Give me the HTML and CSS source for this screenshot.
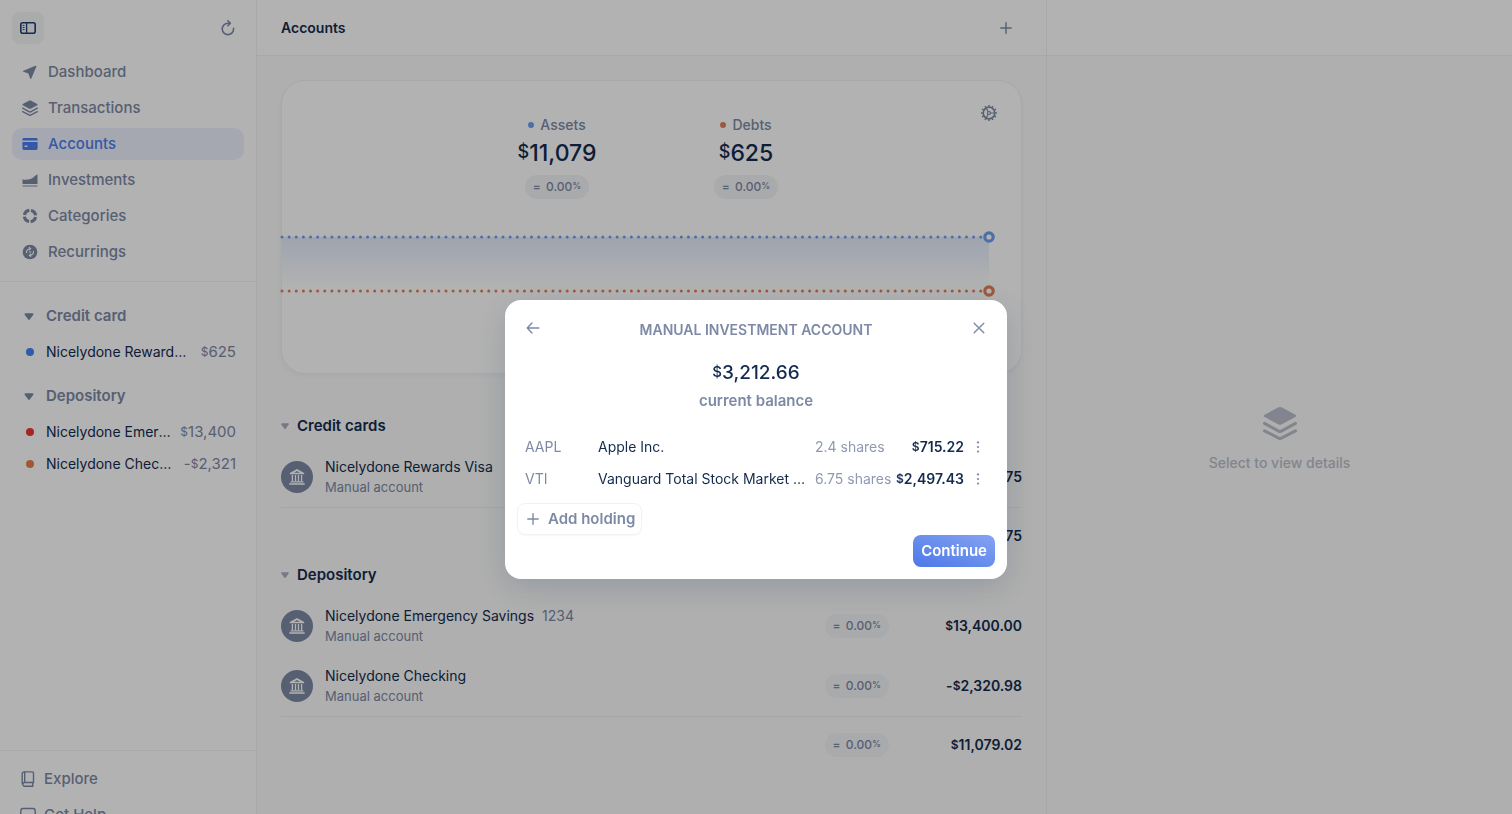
FILE: index.html
```html
<!DOCTYPE html>
<html lang="en">
<head>
    <meta charset="UTF-8">
    <meta name="viewport" content="width=device-width, initial-scale=1.0">
    <title>Accounts</title>
    <link rel="stylesheet" href="styles.css">
</head>
<body>
    <svg width="0" height="0" class="sprite" aria-hidden="true">
        <symbol id="layers" viewBox="0 0 16 16">
            <path d="M7.3.6a1.6 1.6 0 0 1 1.4 0l6.5 3.5c.5.3.5.8 0 1.1L8.7 8.7a1.6 1.6 0 0 1-1.4 0L.8 5.2c-.5-.3-.5-.8 0-1.1z" fill="currentColor"/>
            <path d="M.7 8.2 7.4 11.8a1.3 1.3 0 0 0 1.2 0L15.3 8.2M.7 11.7 7.4 15.1a1.3 1.3 0 0 0 1.2 0L15.3 11.7" fill="none" stroke="currentColor" stroke-width="1.4" stroke-linecap="round"/>
        </symbol>
        <symbol id="bank" viewBox="0 0 16 16">
            <path d="M8 0 .8 4v1.2h14.4V4zM8 2l3 1.8H5z" fill="currentColor" fill-rule="evenodd"/>
            <path d="M3.4 6v6M6.5 6v6M9.5 6v6M12.6 6v6" stroke="currentColor" stroke-width="1.3"/>
            <path d="M1.6 12.2h12.8v1.3H1.6zM.3 14.3h15.4v1.5H.3z" fill="currentColor"/>
        </symbol>
        <symbol id="caret" viewBox="0 0 8 6">
            <path d="M.9.3h6.2c.6 0 .9.6.6 1.1L4.8 5.4a1 1 0 0 1-1.6 0L.3 1.4C0 .9.3.3.9.3z" fill="currentColor"/>
        </symbol>
        <symbol id="plus" viewBox="0 0 12 12">
            <path d="M6 .8v10.4M.8 6h10.4" stroke="currentColor" stroke-width="1.4" stroke-linecap="round"/>
        </symbol>
        <symbol id="dots" viewBox="0 0 4 12">
            <circle cx="2" cy="1.4" r="1.1" fill="currentColor"/>
            <circle cx="2" cy="6" r="1.1" fill="currentColor"/>
            <circle cx="2" cy="10.6" r="1.1" fill="currentColor"/>
        </symbol>
    </svg>

    <div class="app">
        <aside class="sidebar">
            <div class="sidebar-top">
                <button class="icon-btn toggle" aria-label="Toggle sidebar">
                    <svg width="16" height="12" viewBox="0 0 16 12" fill="none" stroke="currentColor">
                        <rect x=".8" y=".8" width="14.4" height="10.4" rx="2" stroke-width="1.6"/>
                        <path d="M6.6 1v10" stroke-width="1.3"/>
                        <path d="M2.7 3.4h1.8M2.7 5.5h1.8M2.7 7.6h1.8" stroke-width="1"/>
                    </svg>
                </button>
                <button class="icon-btn" aria-label="Refresh">
                    <svg width="14" height="16" viewBox="0 0 14 16" fill="none" stroke="currentColor" stroke-width="1.6" stroke-linecap="round" stroke-linejoin="round">
                        <path d="M12.6 8.4A5.7 5.7 0 1 1 6.9 3.2H9"/>
                        <path d="M6.9.8 9.3 3.2 6.9 5.7"/>
                    </svg>
                </button>
            </div>

            <nav class="nav">
                <a href="#">
                    <svg width="16" height="16" viewBox="0 0 16 16"><path d="M13.4 1.8 1.4 6.7c-.6.3-.6.9 0 1.1l5 1.8 1.8 5c.2.6.8.6 1.1 0L14.3 2.7c.2-.6-.3-1.1-.9-.9z" fill="currentColor"/></svg>
                    Dashboard
                </a>
                <a href="#">
                    <svg width="16" height="16"><use href="#layers"/></svg>
                    Transactions
                </a>
                <a href="#" class="active">
                    <svg width="16" height="16" viewBox="0 0 16 16"><path d="M2 2h12c1 0 1.6.6 1.6 1.6v.9H.4v-.9C.4 2.6 1 2 2 2zM.4 6h15.2v6.2c0 1-.6 1.7-1.6 1.7H2c-1 0-1.6-.7-1.6-1.7zM2.5 9.5v1.4h3V9.5z" fill="currentColor" fill-rule="evenodd"/></svg>
                    Accounts
                </a>
                <a href="#">
                    <svg width="16" height="16" viewBox="0 0 16 16"><path d="M.5 7.6c3 .3 4.5-.2 7-.4C10.5 6.8 12 4.3 15.5 2.2V12H.5zM.5 13.4h15v1.2H.5z" fill="currentColor"/></svg>
                    Investments
                </a>
                <a href="#">
                    <svg width="16" height="16" viewBox="0 0 16 16"><circle cx="8" cy="8" r="5.6" fill="none" stroke="currentColor" stroke-width="3.2" pathLength="100" stroke-dasharray="20 5" stroke-dashoffset="-3"/></svg>
                    Categories
                </a>
                <a href="#">
                    <svg width="16" height="16" viewBox="0 0 16 16">
                        <circle cx="8" cy="8" r="7.3" fill="currentColor"/>
                        <path d="M4.6 9.2A3.6 3.6 0 0 1 8 4.7M11.4 6.8A3.6 3.6 0 0 1 8 11.3M7 3.2l1.6 1.5L7 6.2M9 9.8l-1.6 1.5L9 12.8M6.7 8h2.6" fill="none" stroke="#fff" stroke-width="1.1"/>
                    </svg>
                    Recurrings
                </a>
            </nav>

            <div class="side-accounts">
                <section>
                    <h3><svg width="10" height="7"><use href="#caret"/></svg>Credit card</h3>
                    <a href="#"><i class="dot blue"></i><span class="name">Nicelydone Rewards Visa</span><span class="sum"><small>$</small>625</span></a>
                </section>
                <section>
                    <h3><svg width="10" height="7"><use href="#caret"/></svg>Depository</h3>
                    <a href="#"><i class="dot red"></i><span class="name">Nicelydone Emergency Savings</span><span class="sum"><small>$</small>13,400</span></a>
                    <a href="#"><i class="dot orange"></i><span class="name">Nicelydone Checking</span><span class="sum">-<small>$</small>2,321</span></a>
                </section>
            </div>

            <div class="sidebar-bottom">
                <a href="#">
                    <svg width="16" height="16" viewBox="0 0 16 16" fill="none" stroke="currentColor" stroke-width="1.4"><path d="M4 .9h8.2c.8 0 1.3.5 1.3 1.3v9.3H4a2 2 0 0 0 0 3.7h9.5M2.2 13.3V2.7C2.2 1.6 3 .9 4 .9M4.7 1v10.4M12.7 11.6v3.5"/></svg>
                    Explore
                </a>
                <a href="#">
                    <svg width="16" height="16" viewBox="0 0 16 16" fill="none" stroke="currentColor" stroke-width="1.4"><path d="M3 1.5h10c1.3 0 2.2.8 2.2 2.2v6c0 1.3-.9 2.2-2.2 2.2H9l-4 3v-3H3C1.7 11.9.8 11 .8 9.7v-6c0-1.4.9-2.2 2.2-2.2z"/></svg>
                    Get Help
                </a>
            </div>
        </aside>

        <main class="main">
            <header class="bar">
                <h1>Accounts</h1>
                <button class="icon-btn" aria-label="Add account"><svg width="12" height="12"><use href="#plus"/></svg></button>
            </header>

            <div class="content">
                <div class="card">
                    <button class="icon-btn settings" aria-label="Chart settings">
                        <svg width="18" height="18" viewBox="0 0 18 18" fill="none" stroke="currentColor">
                            <circle cx="9" cy="9" r="7.2" stroke-width="1.6" pathLength="120" stroke-dasharray="4 6" stroke-dashoffset="2"/>
                            <circle cx="9" cy="9" r="5.8" stroke-width="1.7"/>
                            <circle cx="9" cy="9" r="1.5" stroke-width="1.2"/>
                            <path d="M10.5 9H15M8.2 7.7 6 3.9M8.2 10.3 6 14.1" stroke-width="1.2"/>
                        </svg>
                    </button>
                    <div class="stats">
                        <div class="stat">
                            <span class="label"><i class="point assets"></i>Assets</span>
                            <strong><small>$</small>11,079</strong>
                            <span class="pill"><b>=</b> 0.00<small>%</small></span>
                        </div>
                        <div class="stat">
                            <span class="label"><i class="point debts"></i>Debts</span>
                            <strong><small>$</small>625</strong>
                            <span class="pill"><b>=</b> 0.00<small>%</small></span>
                        </div>
                    </div>
                    <svg class="chart" height="72">
                        <defs>
                            <linearGradient id="fade" x1="0" y1="0" x2="0" y2="1">
                                <stop offset="0" stop-color="#4a80e8" stop-opacity=".16"/>
                                <stop offset="1" stop-color="#4a80e8" stop-opacity="0"/>
                            </linearGradient>
                        </defs>
                        <rect x="0" y="8" width="100%" height="50" fill="url(#fade)"/>
                        <g stroke-width="3" stroke-linecap="round" stroke-dasharray="0 7.13">
                            <line x1="0" y1="8" x2="100%" y2="8" stroke="#6f9ff0"/>
                            <line x1="0" y1="62" x2="100%" y2="62" stroke="#e08055"/>
                        </g>
                        <svg x="100%" overflow="visible" fill="#fff" stroke-width="3.2">
                            <circle cx="0" cy="8" r="4.2" stroke="#6f9ff0"/>
                            <circle cx="0" cy="62" r="4.2" stroke="#e08055"/>
                        </svg>
                    </svg>
                </div>

                <section class="group">
                    <h2><svg width="8" height="6"><use href="#caret"/></svg>Credit cards</h2>
                    <div class="account">
                        <span class="logo"><svg width="16" height="16"><use href="#bank"/></svg></span>
                        <div class="who">
                            <p>Nicelydone Rewards Visa</p>
                            <p class="sub">Manual account</p>
                        </div>
                        <span class="pill"><b>=</b> 0.00<small>%</small></span>
                        <span class="amount"><small>$</small>624.75</span>
                    </div>
                    <div class="total">
                        <span class="pill"><b>=</b> 0.00<small>%</small></span>
                        <span class="amount"><small>$</small>624.75</span>
                    </div>
                </section>

                <section class="group">
                    <h2><svg width="8" height="6"><use href="#caret"/></svg>Depository</h2>
                    <div class="account">
                        <span class="logo"><svg width="16" height="16"><use href="#bank"/></svg></span>
                        <div class="who">
                            <p>Nicelydone Emergency Savings <span class="mask">1234</span></p>
                            <p class="sub">Manual account</p>
                        </div>
                        <span class="pill"><b>=</b> 0.00<small>%</small></span>
                        <span class="amount"><small>$</small>13,400.00</span>
                    </div>
                    <div class="account">
                        <span class="logo"><svg width="16" height="16"><use href="#bank"/></svg></span>
                        <div class="who">
                            <p>Nicelydone Checking</p>
                            <p class="sub">Manual account</p>
                        </div>
                        <span class="pill"><b>=</b> 0.00<small>%</small></span>
                        <span class="amount">-<small>$</small>2,320.98</span>
                    </div>
                    <div class="total">
                        <span class="pill"><b>=</b> 0.00<small>%</small></span>
                        <span class="amount"><small>$</small>11,079.02</span>
                    </div>
                </section>
            </div>
        </main>

        <aside class="details">
            <div class="bar"></div>
            <div class="empty">
                <svg width="34" height="34"><use href="#layers"/></svg>
                <p>Select to view details</p>
            </div>
        </aside>
    </div>

    <div class="overlay">
        <div class="modal" role="dialog" aria-modal="true" aria-labelledby="modal-title">
            <div class="modal-head">
                <button class="icon-btn" aria-label="Back">
                    <svg width="14" height="12" viewBox="0 0 14 12" fill="none" stroke="currentColor" stroke-width="1.4" stroke-linecap="round" stroke-linejoin="round"><path d="M6 1 1.2 6 6 11M1.2 6h11.6"/></svg>
                </button>
                <h2 id="modal-title">MANUAL INVESTMENT ACCOUNT</h2>
                <button class="icon-btn" aria-label="Close">
                    <svg width="12" height="12" viewBox="0 0 12 12" stroke="currentColor" stroke-width="1.4" stroke-linecap="round"><path d="M1.2 1.2l9.6 9.6M10.8 1.2 1.2 10.8"/></svg>
                </button>
            </div>
            <div class="balance">
                <strong><small>$</small>3,212.66</strong>
                <span>current balance</span>
            </div>
            <table class="holdings">
                <tr>
                    <td class="ticker">AAPL</td>
                    <td class="company">Apple Inc.</td>
                    <td class="shares">2.4 shares</td>
                    <td class="value"><small>$</small>715.22</td>
                    <td class="more"><button class="icon-btn" aria-label="AAPL options"><svg width="4" height="12"><use href="#dots"/></svg></button></td>
                </tr>
                <tr>
                    <td class="ticker">VTI</td>
                    <td class="company">Vanguard Total Stock Market Index Fund ETF</td>
                    <td class="shares">6.75 shares</td>
                    <td class="value"><small>$</small>2,497.43</td>
                    <td class="more"><button class="icon-btn" aria-label="VTI options"><svg width="4" height="12"><use href="#dots"/></svg></button></td>
                </tr>
            </table>
            <button class="add"><svg width="12" height="12"><use href="#plus"/></svg>Add holding</button>
            <div class="modal-foot">
                <button class="continue">Continue</button>
            </div>
        </div>
    </div>
</body>
</html>
```

FILE: styles.css
```css
* {
    box-sizing: border-box;
    margin: 0;
    padding: 0;
}

body {
    font-family: Inter, "Liberation Sans", sans-serif;
    font-size: 15px;
    line-height: 20px;
    color: #142b4f;
    overflow: hidden;
}

a {
    color: inherit;
    text-decoration: none;
}

button {
    font: inherit;
    color: inherit;
    background: none;
    border: none;
    cursor: pointer;
}

svg {
    display: block;
    flex-shrink: 0;
}

.sprite {
    position: absolute;
}

/* raised currency and percent signs */
small {
    font-size: 12px;
    line-height: 1;
    vertical-align: 1px;
}

.icon-btn {
    display: flex;
    align-items: center;
    justify-content: center;
    width: 32px;
    height: 32px;
    border-radius: 8px;
    color: #7d89a5;
}

.app {
    display: grid;
    grid-template-columns: 257px 1fr 466px;
    height: 100vh;
}

/* Sidebar */
.sidebar {
    display: flex;
    flex-direction: column;
    min-height: 0;
    border-right: 1px solid #f0f2f3;
    background: #fff;
    color: #7d89a5;
}

.sidebar-top {
    display: flex;
    justify-content: space-between;
    padding: 12px;
}

.toggle {
    background: #f2f6f5;
    color: #1f3f70;
}

.nav {
    display: flex;
    flex-direction: column;
    gap: 4px;
    padding: 0 12px 13px;
    border-bottom: 1px solid #f0f2f3;
    font-weight: 500;
}

.nav a,
.sidebar-bottom a {
    display: flex;
    align-items: center;
    gap: 10px;
    height: 32px;
    padding: 0 10px;
    border-radius: 10px;
}

.nav a.active {
    background: #edf1fc;
    color: #4d7df0;
}

.side-accounts {
    flex: 1;
    display: flex;
    flex-direction: column;
    gap: 12px;
    min-height: 0;
    padding: 18px 20px;
    overflow: hidden;
}

.side-accounts h3 {
    display: flex;
    align-items: center;
    gap: 12px;
    height: 32px;
    margin-bottom: 4px;
    padding-left: 4px;
    font-size: 15px;
    font-weight: 600;
}

.side-accounts a {
    display: flex;
    align-items: center;
    height: 32px;
    padding-left: 6px;
}

.name {
    flex: 1;
    margin: 0 8px 0 12px;
    color: #142b4f;
    font-size: 14px;
    overflow: hidden;
    text-overflow: ellipsis;
    white-space: nowrap;
}

.dot {
    width: 8px;
    height: 8px;
    border-radius: 50%;
}

.dot.blue {
    background: #4285f4;
}

.dot.red {
    background: #ea3a30;
}

.dot.orange {
    background: #e58049;
}

.sidebar-bottom {
    display: flex;
    flex-direction: column;
    gap: 4px;
    flex-shrink: 0;
    height: 64px;
    padding: 12px 10px;
    border-top: 1px solid #f0f2f3;
    font-weight: 500;
    overflow: hidden;
}

.sidebar-bottom a {
    flex-shrink: 0;
    gap: 8px;
}

/* Main column */
.main,
.details {
    display: flex;
    flex-direction: column;
    min-width: 0;
    min-height: 0;
    background: #f9fbfa;
}

.bar {
    display: flex;
    align-items: center;
    justify-content: space-between;
    flex-shrink: 0;
    height: 56px;
    padding: 0 24px;
    border-bottom: 1px solid #f0f2f3;
    background: #fff;
}

h1 {
    font-size: 14px;
    font-weight: 600;
}

.content {
    flex: 1;
    padding: 24px;
    overflow: hidden;
}

.card {
    position: relative;
    height: 294px;
    margin-bottom: 41px;
    border: 1px solid #f0f2f3;
    border-radius: 24px;
    background: #fff;
    box-shadow: 0 2px 4px rgba(20, 43, 79, 0.04);
}

.settings {
    position: absolute;
    top: 16px;
    right: 16px;
}

.stats {
    display: flex;
    justify-content: center;
    padding-top: 34px;
}

.stat {
    display: flex;
    flex-direction: column;
    align-items: center;
    width: 189px;
}

.stat strong {
    margin: 4px 0 8px;
    font-size: 23px;
    font-weight: 500;
    line-height: 28px;
}

.stat strong small {
    font-size: 18px;
    vertical-align: 3px;
}

.label {
    display: flex;
    align-items: center;
    gap: 6px;
    color: #7d89a5;
    font-size: 14px;
    font-weight: 500;
}

.point {
    width: 6px;
    height: 6px;
    border-radius: 50%;
}

.point.assets {
    background: #6f9ff0;
}

.point.debts {
    background: #e08055;
}

.pill {
    padding: 0 8px;
    border-radius: 12px;
    background: #f2f4f7;
    color: #7d89a5;
    font-size: 12px;
    font-weight: 500;
    line-height: 24px;
    white-space: nowrap;
}

.pill b {
    margin-right: 2px;
    font-weight: 500;
}

.pill small {
    font-size: 9px;
    vertical-align: 2px;
}

.chart {
    width: calc(100% - 32px);
    margin-top: 30px;
    overflow: visible;
}

/* Account groups */
.group h2 {
    display: flex;
    align-items: center;
    gap: 8px;
    margin-bottom: 10px;
    font-size: 15px;
    font-weight: 600;
    line-height: 22px;
}

.group h2 svg {
    color: #a9afbd;
}

.account,
.total {
    display: flex;
    align-items: center;
    height: 60px;
}

.total {
    justify-content: flex-end;
    height: 57px;
    border-top: 1px solid #eceef1;
}

.logo {
    display: flex;
    align-items: center;
    justify-content: center;
    width: 32px;
    height: 32px;
    margin-right: 12px;
    border-radius: 50%;
    background: #7d89a5;
    color: #fff;
}

.who {
    flex: 1;
    font-size: 14px;
}

.sub {
    color: #7d89a5;
    font-size: 13px;
}

.mask {
    margin-left: 4px;
    color: #7d89a5;
}

.amount {
    width: 133px;
    font-size: 14px;
    font-weight: 600;
    text-align: right;
}

/* Details */
.details {
    border-left: 1px solid #f0f2f3;
}

.empty {
    flex: 1;
    display: flex;
    flex-direction: column;
    align-items: center;
    justify-content: center;
    gap: 13px;
    padding-top: 8px;
    color: #bbbfcc;
    font-size: 14px;
    font-weight: 500;
}

/* Modal */
.overlay {
    position: fixed;
    inset: 0;
    display: flex;
    align-items: center;
    justify-content: center;
    padding-top: 65px;
    background: rgba(0, 0, 0, 0.3);
}

.modal {
    width: 100%;
    max-width: 502px;
    padding: 12px;
    border-radius: 16px;
    background: #fff;
    box-shadow: 0 8px 32px rgba(20, 43, 79, 0.16);
}

.modal-head {
    display: flex;
    align-items: center;
    justify-content: space-between;
}

.modal-head h2 {
    padding-top: 4px;
    color: #7d89a5;
    font-size: 14px;
    font-weight: 600;
}

.balance {
    display: flex;
    flex-direction: column;
    align-items: center;
    gap: 6px;
    padding: 17px 0 20px;
    color: #7d89a5;
    font-weight: 600;
}

.balance strong {
    color: #142b4f;
    font-size: 19px;
    font-weight: 500;
    line-height: 24px;
}

.balance small {
    font-size: 15px;
    vertical-align: 2px;
}

.holdings {
    width: 100%;
    table-layout: fixed;
    border-collapse: collapse;
    font-size: 14px;
}

.holdings td {
    height: 32px;
    white-space: nowrap;
}

.holdings .ticker {
    width: 81px;
    padding-left: 8px;
    color: #7d89a5;
}

.holdings .company {
    padding-right: 8px;
    overflow: hidden;
    text-overflow: ellipsis;
}

.holdings .shares {
    width: 80px;
    color: #8f99b1;
}

.holdings .value {
    width: 69px;
    font-weight: 600;
    text-align: right;
}

.holdings .more {
    width: 31px;
}

.holdings .more .icon-btn {
    width: 28px;
}

.add {
    display: flex;
    align-items: center;
    gap: 9px;
    height: 32px;
    margin-top: 8px;
    padding: 0 6px 0 9px;
    border: 1px solid #f0f2f5;
    border-radius: 8px;
    box-shadow: 0 1px 2px rgba(20, 43, 79, 0.04);
    color: #7d89a5;
    font-weight: 600;
}

.modal-foot {
    display: flex;
    justify-content: flex-end;
}

.continue {
    height: 32px;
    padding: 0 8px;
    border-radius: 8px;
    background: linear-gradient(20deg, #4c78e8, #85a3f2);
    color: #fff;
    font-weight: 600;
}
```
